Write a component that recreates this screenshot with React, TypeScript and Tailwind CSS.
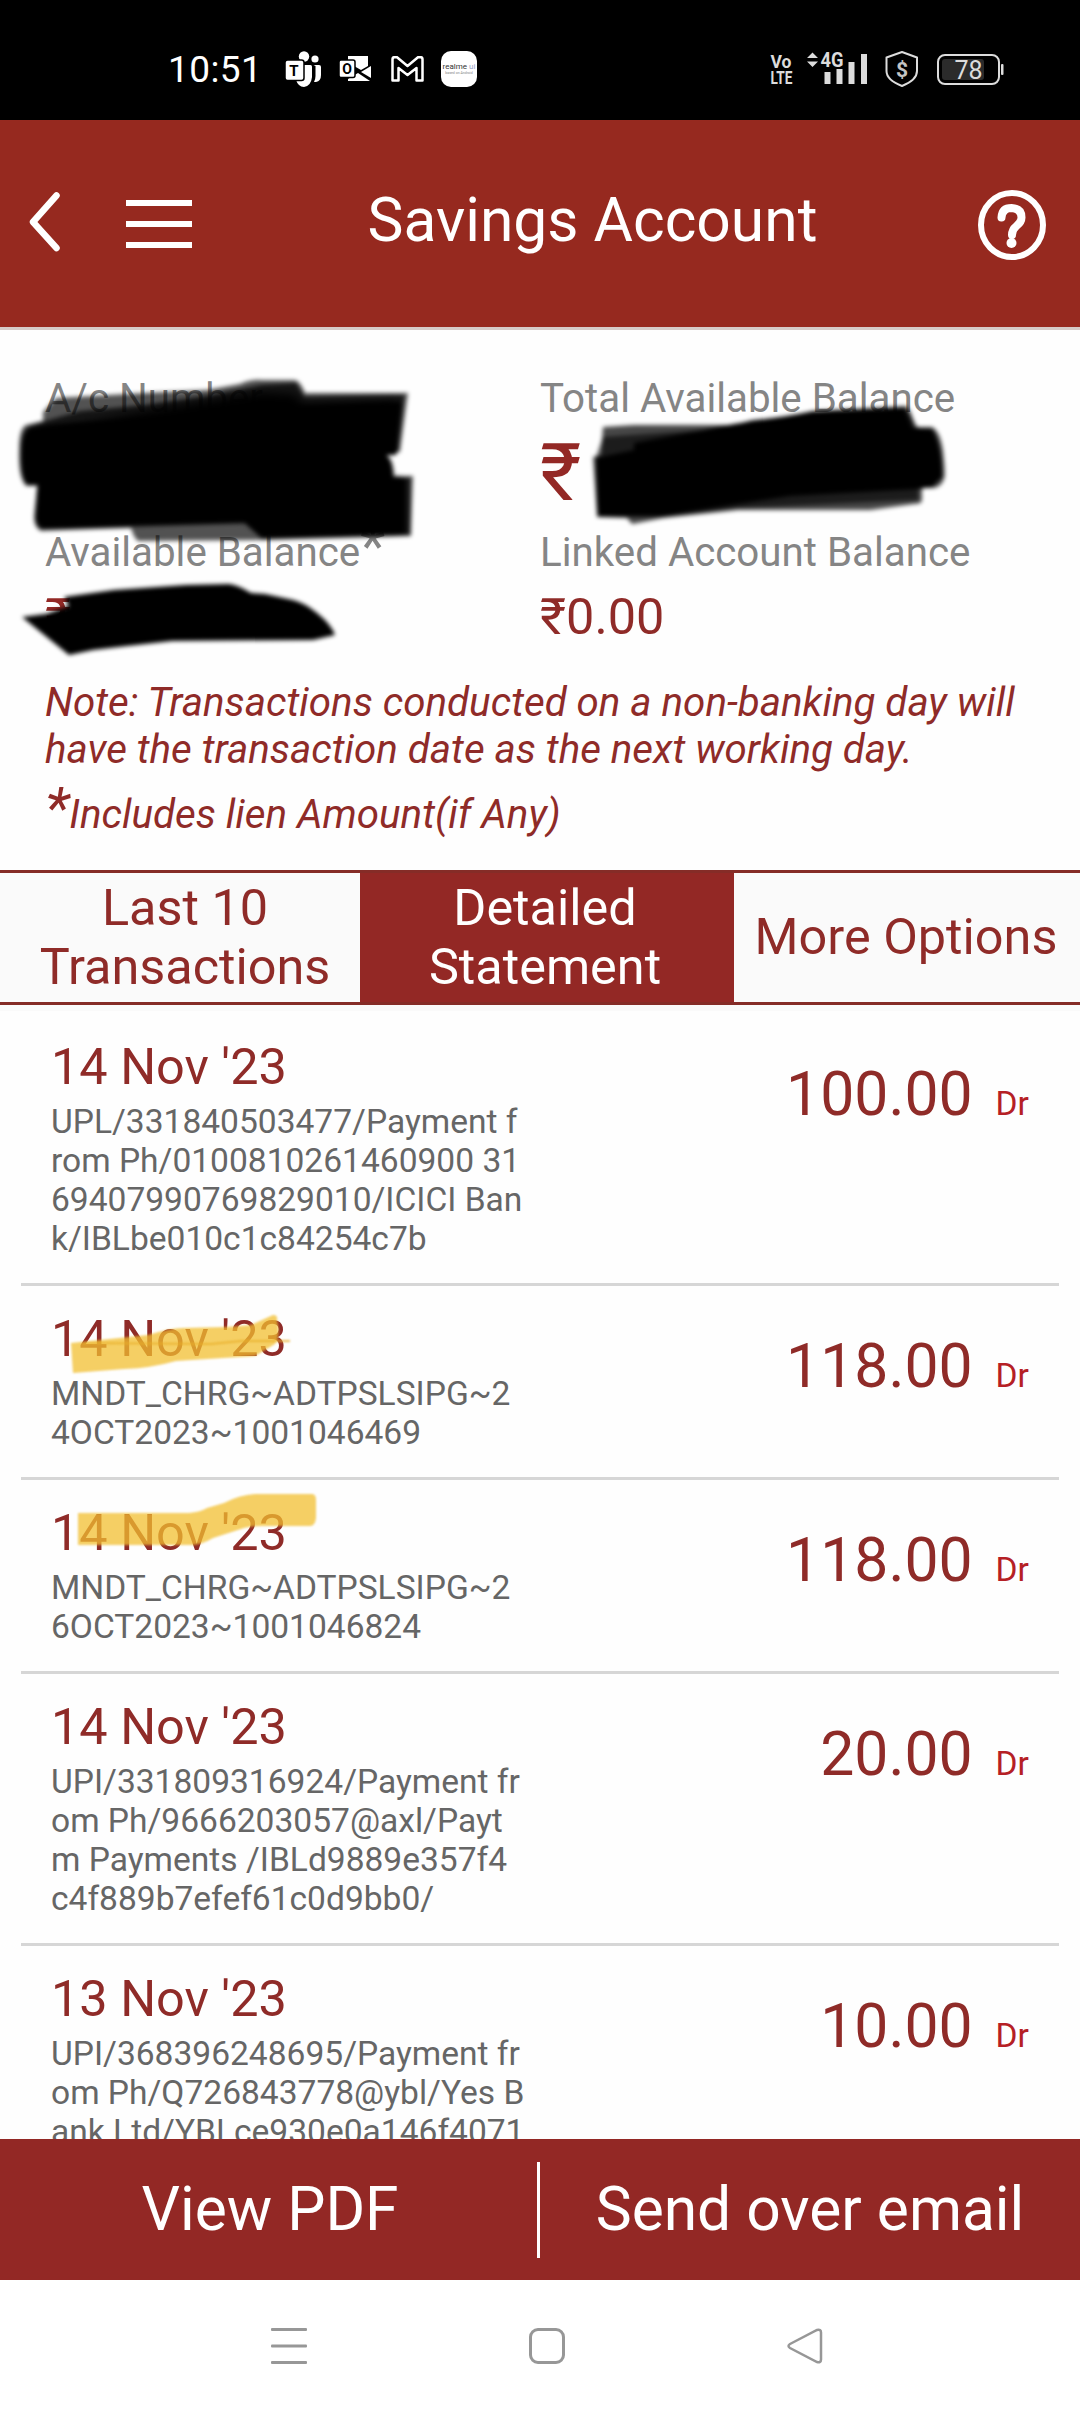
import type { ReactNode } from "react";

type Transaction = {
  date: string;
  lines: string[];
  amount: string;
  highlight?: ReactNode;
};

const transactions: Transaction[] = [
  {
    date: "14 Nov '23",
    lines: [
      "UPL/331840503477/Payment f",
      "rom Ph/0100810261460900 31",
      "69407990769829010/ICICI Ban",
      "k/IBLbe010c1c84254c7b",
    ],
    amount: "100.00",
  },
  {
    date: "14 Nov '23",
    lines: ["MNDT_CHRG~ADTPSLSIPG~2", "4OCT2023~1001046469"],
    amount: "118.00",
    highlight: (
      <>
        <path
          d="M50 57L79 54L127 49Q150 42 162 42L206 41L230 39L252 29Q257 29 256 34Q260 50 254 58L234 70L186 73L155 75Q130 82 103 83L52 87Z"
          fill="#f2bf30"
          fillOpacity="0.75"
        />
        <path d="M62 57L190 58L220 55L269 55" stroke="#eab02a" strokeWidth="2" strokeOpacity="0.8" fill="none" />
      </>
    ),
  },
  {
    date: "14 Nov '23",
    lines: ["MNDT_CHRG~ADTPSLSIPG~2", "6OCT2023~1001046824"],
    amount: "118.00",
    highlight: (
      <path
        d="M57 33H168Q180 32 186 28L203 23Q218 15 234 14H291Q295 14 295 20V38Q294 46 289 46H241Q228 46 220 49L192 58Q182 64 172 65H57Z"
        fill="#f2bf30"
        fillOpacity="0.75"
      />
    ),
  },
  {
    date: "14 Nov '23",
    lines: [
      "UPI/331809316924/Payment fr",
      "om Ph/9666203057@axl/Payt",
      "m Payments /IBLd9889e357f4",
      "c4f889b7efef61c0d9bb0/",
    ],
    amount: "20.00",
  },
  {
    date: "13 Nov '23",
    lines: [
      "UPI/368396248695/Payment fr",
      "om Ph/Q726843778@ybl/Yes B",
      "ank Ltd/YBLce930e0a146f4071",
    ],
    amount: "10.00",
  },
];

function StatusBar() {
  return (
    <div className="flex h-[120px] shrink-0 items-center justify-between bg-black pt-[18px] pr-[76px] pl-[168px]">
      <div className="flex items-center">
        <span className="w-[117px] text-[37px] leading-none tracking-[0.4px] text-white">10:51</span>
        {/* Teams */}
        <svg width="36" height="36" viewBox="0 0 36 36" fill="#fff">
          <circle cx="19" cy="5.5" r="5.2" />
          <circle cx="30" cy="8" r="3.6" />
          <path d="M28.5 14H34q2 0 2 2v8q0 6-5 7h-2q1.500-3 1.500-6V15z" />
          <path d="M12 14h13.500q1.500 0 1.500 1.500V26q-1 9-8 10-6-.5-8-7z" />
          <rect x="0" y="9" width="19" height="20.500" rx="2.500" stroke="#000" strokeWidth="1.500" />
          <text x="9" y="24.500" textAnchor="middle" fontSize="15" fontWeight="700" fill="#000">T</text>
        </svg>
        {/* Outlook */}
        <svg className="ml-[18px]" width="32" height="26" viewBox="0 0 32 26" fill="#fff">
          <path d="M9 0H29V10L22 14L15 10H9z" />
          <path d="M32 10V22L22 16z" />
          <path d="M9 23L19 17L31 25H9z" />
          <rect x="0" y="4" width="16" height="17.500" rx="2" stroke="#000" strokeWidth="1.500" />
          <text x="8" y="18" textAnchor="middle" fontSize="14" fontWeight="700" fill="#000">O</text>
        </svg>
        {/* Gmail */}
        <svg className="ml-5" width="33" height="26" viewBox="0 0 33 26" fill="none" stroke="#fff" strokeWidth="2.500" strokeLinejoin="round">
          <path d="M1.500 3.500Q1.500 1.200 3.500 1.200H6L16.500 10L27 1.200H29.500Q31.500 1.200 31.500 3.500V24.500H25.500V12L16.500 19L7.500 12V24.500H1.500Z" />
        </svg>
        <div className="ml-[17px] flex h-9 w-9 flex-col items-center justify-center rounded-[10px] bg-white">
          <span className="text-[8px] leading-[8px] whitespace-nowrap text-[#333]">
            realme <span className="text-[#9aa3c8]">ui</span>
          </span>
          <span className="text-[3.5px] leading-[4px] whitespace-nowrap text-[#888]">based on Android</span>
        </div>
      </div>
      <svg width="234" height="38" viewBox="770 50 234 38" fill="#dcdcdc">
        <g fontWeight="700">
          <text x="770.500" y="67.500" fontSize="19" textLength="21" lengthAdjust="spacingAndGlyphs">Vo</text>
          <text x="770.500" y="84" fontSize="19" textLength="22" lengthAdjust="spacingAndGlyphs">LTE</text>
          <text x="820.500" y="67" fontSize="20" textLength="23" lengthAdjust="spacingAndGlyphs">4G</text>
        </g>
        <path d="M807 58L812.500 52.500L818 58zM807 61.500H818L812.500 67z" />
        <rect x="824.500" y="72" width="6" height="12" />
        <rect x="836.500" y="69" width="6" height="15" />
        <rect x="848.500" y="62" width="6" height="22" />
        <rect x="861" y="54" width="6" height="30" />
        <path
          d="M902 52L917 57.500V71Q917 80 902 86Q886.500 80 886.500 71V57.500Z"
          fill="none"
          stroke="#dcdcdc"
          strokeWidth="2"
          strokeLinejoin="round"
        />
        <text x="902" y="76.500" fontSize="21" fontWeight="700" fill="#c4c4c4" textAnchor="middle">$</text>
        <rect x="942" y="59" width="42" height="21" rx="3" fill="#2b2b2b" />
        <rect x="938" y="55" width="61" height="29" rx="7" fill="none" stroke="#dcdcdc" strokeWidth="2" />
        <rect x="1001" y="64" width="2.500" height="11" rx="1" />
        <text x="968.500" y="78.500" fontSize="25" textAnchor="middle">78</text>
      </svg>
    </div>
  );
}

function Header() {
  return (
    <header className="flex h-[210px] shrink-0 items-center border-b-3 border-[#d6cbc8] bg-[#96291f] pr-[34px] pl-7">
      <svg width="34" height="62" viewBox="0 0 34 62" fill="none" stroke="#fff" strokeWidth="6.500" strokeLinecap="round" strokeLinejoin="round" className="mb-1">
        <path d="M28.500 4.500L5 31L28.500 57" />
      </svg>
      <div className="ml-16 flex w-[66px] flex-col gap-[15px]">
        <span className="h-1.5 bg-white" />
        <span className="h-1.5 bg-white" />
        <span className="h-1.5 bg-white" />
      </div>
      <h1 className="ml-[40px] flex-1 pb-[7px] text-center text-[60.5px] leading-[71px] text-white">
        Savings Account
      </h1>
      <svg className="ml-[25px] mt-[3px]" width="68" height="70" viewBox="0 0 68 70" fill="none" stroke="#fff">
        <ellipse cx="34" cy="35" rx="31" ry="32" strokeWidth="6" />
        <path
          d="M23.500 27.500Q24 18 33.500 18Q43.500 18.500 43.500 27.500Q43.500 32 38.500 36Q34 39.500 34 45"
          strokeWidth="8"
          strokeLinecap="round"
        />
        <circle cx="33.500" cy="53" r="5" fill="#fff" stroke="none" />
      </svg>
    </header>
  );
}

// Marker strokes that hide the private figures
function Scribbles() {
  return (
    <svg className="absolute top-0 left-0 h-[540px] w-full" viewBox="0 330 1080 540">
      <defs>
        <filter id="soft" x="-5%" y="-5%" width="110%" height="110%">
          <feGaussianBlur stdDeviation="2" />
        </filter>
        <filter id="softer" x="-10%" y="-15%" width="120%" height="130%">
          <feGaussianBlur stdDeviation="5" />
        </filter>
      </defs>
      <g filter="url(#soft)">
        <path
          fillOpacity="0.68"
          d="M43 412L56 398L145 393L207 390L240 384Q252 379 262 380H294Q300 380 305 393H408L400 452L384 454Q394 458 394 476H413L411 536L262 540L138 541Q134 538 131 528L65 530L41 531Q33 527 34 515L37 486H26Q18 478 19 450Q19 428 26 425L43 421Z"
        />
        <path
          fillOpacity="0.75"
          d="M45 421L80 411L145 405L207 396L262 385L296 383L304 397L404 395L398 452H384L392 478H410V535L262 539L245 523L65 529L41 529Q35 524 36 515L38 485H28Q20 478 21 450Q21 430 30 426Z"
        />
        <path d="M48 425L31 428Q22 432 22 450Q21 482 28 484H38L36 518Q37 528 45 528L131 525L245 522L262 537L405 534V478H392Q392 460 384 455H396L401 402L304 406L262 412L140 419Z" />
      </g>
      <path filter="url(#softer)" d="M50 430L140 412L262 392L294 394L304 404L396 402L384 455L388 478L400 482V528L262 530L245 518L60 518Z" />
      <g filter="url(#soft)">
        <path d="M22 617L46 614L69 606L64 597L114 590L186 585L229 584Q238 585 251 593L265 594L293 600Q305 603 317 613Q331 624 335 635L313 640L172 641L127 646L93 650L69 655Z" />
        <path
          fillOpacity="0.72"
          d="M603 427L634 425H734L752 420L784 417L813 411L906 406Q911 409 915 427H932Q940 431 943 450Q946 476 944 479Q941 487 934 488H922V500Q922 504 914 504L870 510H738L663 518L632 524L627 518L597 517L593 457L601 455Z"
        />
        <path
          fillOpacity="0.6"
          d="M603 437L734 428L813 411L906 408L918 428V500L738 508L663 517H598L596 457Z"
        />
        <path d="M596 458L634 450V443L734 424L813 412L904 408L912 428L932 429Q942 445 942 477L932 487L918 489L790 496L700 510L663 516L598 516Z" />
      </g>
    </svg>
  );
}

function Summary() {
  return (
    <section className="relative flex h-[540px] shrink-0 flex-col px-[45px] pt-[45px] text-[#8f2b28]">
      <div className="grid grid-cols-[495px_1fr] text-[40.3px] leading-[47px] text-[#858585]">
        <div>
          <p>A/c Number</p>
          <p className="mt-[107px]">
            Available Balance<span className="text-[58px] leading-[0]">*</span>
          </p>
          <p className="mt-[11px] text-[50.4px] leading-[59px] text-[#932825]">₹</p>
        </div>
        <div>
          <p>Total Available Balance</p>
          <p className="mt-1 text-[80px] leading-[94px] text-[#932825]">₹</p>
          <p className="mt-[9px]">Linked Account Balance</p>
          <p className="mt-[11px] text-[50.4px] leading-[59px] text-[#8f2b28]">₹0.00</p>
        </div>
      </div>
      <p className="mt-[33px] text-[40.3px] leading-[47px] whitespace-nowrap italic">
        Note: Transactions conducted on a non-banking day will
        <br />
        have the transaction date as the next working day.
      </p>
      <p className="mt-[18px] text-[40.3px] leading-[47px] italic">
        <span className="text-[58px] leading-[0]">*</span>Includes lien Amount(if Any)
      </p>
      <Scribbles />
    </section>
  );
}

function Tabs() {
  return (
    <nav className="grid h-[135px] shrink-0 grid-cols-[360px_374px_346px] border-y-3 border-[#852c27] bg-[#fafafa] text-center text-[50.4px] leading-[59px] text-[#8f2b28]">
      <button className="pb-0.5 pl-2.5">
        Last 10
        <br />
        Transactions
      </button>
      <button className="bg-[#932825] pr-1 pb-0.5 text-white">
        Detailed
        <br />
        Statement
      </button>
      <button className="pr-0.5 pb-0.5 whitespace-nowrap">More Options</button>
    </nav>
  );
}

function TransactionRow({ date, lines, amount, highlight }: Transaction) {
  return (
    <li className="relative mx-[21px] flex justify-between border-b-3 border-[#d6d6d6] pr-[30px] pb-[25px] pl-[30px]">
      <div className="pt-[23px]">
        <p className="text-[50.4px] leading-[59px] text-[#8f2b28]">{date}</p>
        <p className="mt-1.5 text-[33.55px] leading-[39px] whitespace-pre text-[#666]">{lines.join("\n")}</p>
      </div>
      <p className="flex items-baseline self-start pt-[45px] text-[60.7px] leading-[71px] text-[#8f2b28]">
        {amount}
        <span className="ml-[23px] text-[33.55px] leading-none text-[#b52025]">Dr</span>
      </p>
      {highlight && (
        <svg className="absolute top-0 left-0 h-[120px] w-[340px] blur-[1px]" viewBox="0 0 340 120">
          {highlight}
        </svg>
      )}
    </li>
  );
}

function ActionBar() {
  return (
    <div className="flex h-[141px] shrink-0 items-center bg-[#932825] text-center text-[60.5px] leading-[71px] text-white">
      <button className="w-[537px] pl-[3px]">View PDF</button>
      <span className="h-24 w-[3px] bg-white" />
      <button className="flex-1">Send over email</button>
    </div>
  );
}

function SystemNav() {
  return (
    <div className="flex h-[132px] shrink-0 items-center bg-white pl-[271px]">
      <svg width="36" height="36" viewBox="0 0 36 36" fill="#979797">
        <rect y="0" width="36" height="3" rx="1" />
        <rect y="16.500" width="36" height="3" rx="1" />
        <rect y="33" width="36" height="3" rx="1" />
      </svg>
      <div className="ml-[222px] h-9 w-9 rounded-[9px] border-3 border-[#979797]" />
      <svg className="ml-[222px]" width="36" height="36" viewBox="0 0 36 36" fill="none" stroke="#979797" strokeWidth="2.500">
        <path d="M3 16L30 2Q34 1 34 4.500V31.500Q34 35 30 34L3 20Q0 18 3 16Z" />
      </svg>
    </div>
  );
}

export default function App() {
  return (
    <div className="flex h-[2412px] w-[1080px] flex-col overflow-hidden bg-[#fefefe] font-[Roboto,'Noto_Sans',sans-serif]">
      <StatusBar />
      <Header />
      <Summary />
      <Tabs />
      <main className="min-h-0 flex-1 overflow-hidden border-t-6 border-[#fafafa] pt-[3px]">
        <ul>
          {transactions.map((transaction, i) => (
            <TransactionRow key={i} {...transaction} />
          ))}
        </ul>
      </main>
      <ActionBar />
      <SystemNav />
    </div>
  );
}
